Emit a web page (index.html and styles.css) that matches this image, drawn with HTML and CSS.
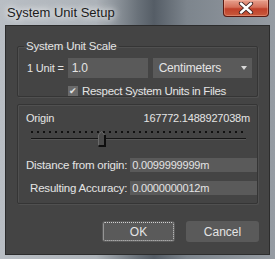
FILE: index.html
```html
<!DOCTYPE html>
<html lang="en">

<head>
  <meta charset="UTF-8">
  <title>System Unit Setup</title>
  <link rel="stylesheet" href="styles.css">
</head>

<body>

  <div class="window">

    <!-- title bar -->
    <div class="titlebar">
      <span class="title">System Unit Setup</span>
      <button class="close" aria-label="Close">
        <svg width="18" height="12" viewBox="0 0 18 12">
          <path d="M4 1.5 L14 10.5 M14 1.5 L4 10.5" stroke="#3a2020" stroke-width="4.2" stroke-linecap="round" />
          <path d="M4 1.5 L14 10.5 M14 1.5 L4 10.5" stroke="#ffffff" stroke-width="2.4" stroke-linecap="round" />
        </svg>
      </button>
    </div>

    <div class="client">

      <!-- unit scale -->
      <fieldset class="group group-scale">
        <legend>System Unit Scale</legend>
        <div class="row">
          <label class="unit-label" for="unit">1 Unit =</label>
          <input class="field unit-field" id="unit" value="1.0">
          <div class="select">
            <span>Centimeters</span>
            <span class="caret"></span>
          </div>
        </div>
        <label class="check">
          <span class="box">&#10004;</span>
          Respect System Units in Files
        </label>
      </fieldset>

      <!-- origin -->
      <fieldset class="group group-origin">
        <div class="origin-head">
          <span>Origin</span>
          <span>167772.1488927038m</span>
        </div>
        <div class="slider">
          <div class="ticks"></div>
          <div class="track"></div>
          <svg class="thumb" width="8" height="16" viewBox="0 0 8 16">
            <path d="M0.5 4 L3.5 0.5 L6.5 4 L6.5 14.5 L0.5 14.5 Z" fill="#4a4a4a" stroke="#6a6a6a" />
            <path d="M7 4 L7 15 L0.5 15" fill="none" stroke="#0e0e0e" stroke-width="2" />
          </svg>
        </div>
        <div class="readout">
          <label for="dist">Distance from origin:</label>
          <input class="field" id="dist" value="0.0099999999m">
          <label for="acc">Resulting Accuracy:</label>
          <input class="field" id="acc" value="0.0000000012m">
        </div>
      </fieldset>

      <div class="actions">
        <button class="btn btn-ok">OK</button>
        <button class="btn">Cancel</button>
      </div>

    </div>
  </div>

</body>

</html>
```

FILE: styles.css
```css
body {
  margin: 0;
  font-family: "Liberation Sans", Arial, sans-serif;
  font-size: 11px;
  letter-spacing: -0.2px;
  white-space: nowrap;
}

/* window frame */
.window {
  width: 275px;
  height: 259px;
  box-sizing: border-box;
  padding: 0 5px 4px;
  background: linear-gradient(90deg, #b9bec4 0%, #adb3b9 35%, #6a727a 50%, #555d66 56%, #7d858d 68%, #969ca3 100%);
  display: flex;
  flex-direction: column;
}

.titlebar {
  height: 25px;
  display: flex;
  align-items: flex-start;
}

.title {
  margin: 5px 0 0 2px;
  font-size: 13px;
  letter-spacing: 0;
  color: #1b1b1b;
  text-shadow: 0 0 6px #fff, 0 0 10px rgba(255, 255, 255, 0.8);
}

.close {
  margin-left: auto;
  margin-right: 1px;
  width: 46px;
  height: 17px;
  padding: 0;
  border: 1px solid #5a1a12;
  border-top: 0;
  border-radius: 0 0 4px 4px;
  background: linear-gradient(#e7a08e 0%, #d5705a 45%, #c0402a 55%, #c85a3c 100%);
  box-shadow: inset 0 0 0 1px rgba(255, 200, 180, 0.35);
  display: flex;
  align-items: center;
  justify-content: center;
}

/* dark client area */
.client {
  flex: 1;
  background: #444444;
  border: 1px solid #2c2c2c;
  padding: 13px 11px 0;
  color: #e4e4e4;
  display: flex;
  flex-direction: column;
}

.group {
  margin: 0;
  padding: 0;
  min-width: 0;
  border: 1px solid #353535;
  border-radius: 2px;
  box-shadow: 1px 1px 0 #505050, inset 1px 1px 0 #505050;
}

.group legend {
  margin-left: 6px;
  padding: 0 2px;
  line-height: 14px;
  font-size: 11.5px;
}

.group-scale {
  height: 58px;
  box-sizing: border-box;
}

.row {
  margin: 5px 0 0 9px;
  display: flex;
  align-items: center;
  gap: 4px;
}

.field {
  box-sizing: border-box;
  height: 20px;
  border: 0;
  background: #5a5a5a;
  color: #e4e4e4;
  font: inherit;
  letter-spacing: inherit;
  padding: 0 4px;
}

.unit-field {
  width: 80px;
  font-size: 12px;
}

.select {
  margin-left: 1px;
  width: 99px;
  height: 20px;
  box-sizing: border-box;
  background: #5a5a5a;
  display: flex;
  align-items: center;
  justify-content: space-between;
  padding: 0 5px 0 6px;
  font-size: 12px;
}

.caret {
  width: 0;
  height: 0;
  border-left: 3px solid transparent;
  border-right: 3px solid transparent;
  border-top: 4px solid #d8d8d8;
}

.check {
  margin: 7px 0 0 50px;
  display: flex;
  align-items: center;
  gap: 4px;
  line-height: 12px;
  font-size: 11.5px;
  letter-spacing: -0.3px;
}

.box {
  width: 10px;
  height: 10px;
  background: #6a6a6a;
  color: #e0e0e0;
  font-size: 9px;
  line-height: 10px;
  text-align: center;
}

.group-origin {
  margin-top: 7px;
  height: 100px;
  box-sizing: border-box;
  padding: 6px 7px 0 8px;
}

.origin-head {
  display: flex;
  justify-content: space-between;
  line-height: 14px;
}

.slider {
  position: relative;
  margin: 6px 4px 0 5px;
  height: 16px;
}

.ticks {
  margin-top: 4px;
  height: 2px;
  background: repeating-linear-gradient(90deg, #101010 0 2px, transparent 2px 6px);
}

.track {
  margin-top: 5px;
  height: 1px;
  background: #151515;
  box-shadow: 0 1px 0 #555;
}

/* slider thumb lies over the track */
.thumb {
  position: absolute;
  left: 67px;
  top: 0;
}

.readout {
  margin-top: 11px;
  display: grid;
  grid-template-columns: 1fr 127px;
  column-gap: 3px;
  row-gap: 9px;
  align-items: center;
}

.readout label {
  text-align: right;
  font-size: 11.5px;
}

.readout .field {
  height: 14px;
  line-height: 14px;
  padding: 0 2px;
}

.actions {
  margin-top: 17px;
  display: flex;
  justify-content: flex-end;
  gap: 11px;
  margin-right: -1px;
}

.btn {
  width: 73px;
  height: 21px;
  border: 0;
  border-radius: 3px;
  background: #5a5a5a;
  color: #e4e4e4;
  font: inherit;
  font-size: 12px;
}

.btn-ok {
  outline: 1px dotted #d0d0d0;
  outline-offset: -2px;
}
```
